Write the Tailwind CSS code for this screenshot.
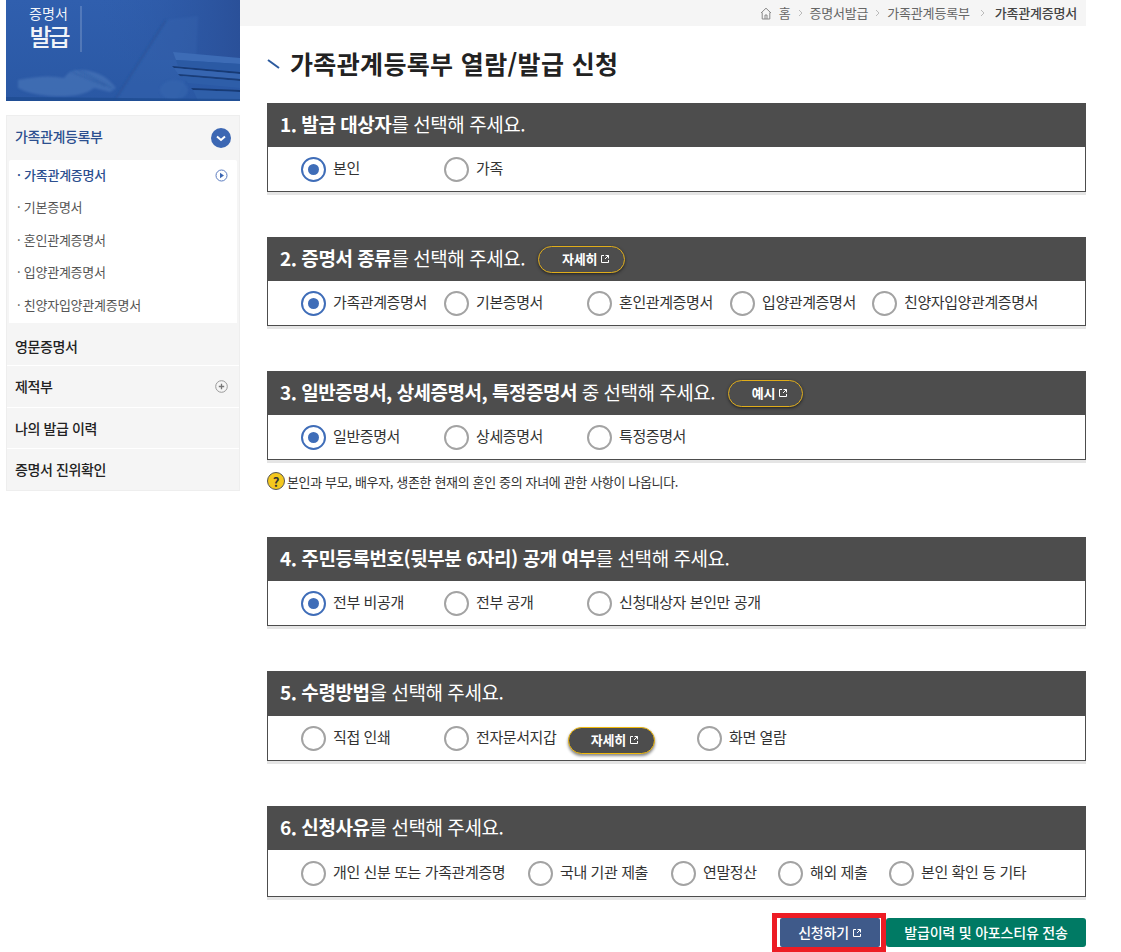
<!DOCTYPE html>
<html lang="ko">
<head>
<meta charset="utf-8">
<script src="https://cdn.jsdelivr.net/npm/@tailwindcss/browser@4"></script>
</head>
<body class="bg-white overflow-hidden">
<div class="w-[1121px] h-[952px] overflow-hidden flex items-start font-['Noto_Sans_CJK_KR','Noto_Sans_KR',sans-serif] text-[#333]">
  <!-- sidebar -->
  <aside class="w-[234px] ml-[6px] shrink-0">
    <div class="relative h-[101px] overflow-hidden bg-gradient-to-b from-[#305fae] to-[#2a58a4]">
      <svg class="absolute inset-0" width="234" height="101" viewBox="0 0 234 101">
        <defs>
          <filter id="b1"><feGaussianBlur stdDeviation="1"/></filter>
          <linearGradient id="g1" x1="0" x2="1"><stop offset="0" stop-color="#2f5dab" stop-opacity="0"/><stop offset="1" stop-color="#2a5099"/></linearGradient>
        </defs>
        <rect x="90" y="0" width="144" height="60" fill="url(#g1)"/>
        <path d="M109 100 L160 20 L192 16 L190 60 L170 100Z" fill="#3a69b3" opacity=".3" filter="url(#b1)"/>
        <path d="M109 100 L160 20" stroke="#2a5299" stroke-width="1.5" filter="url(#b1)"/>
        <path d="M167 52 L234 58 L234 64 L170 60Z" fill="#3d6cb6"/>
        <path d="M170 60 L234 64 L234 71 L172 66Z" fill="#2b5aa4"/>
        <path d="M166 66 L234 72 L234 74 L168 68Z" fill="#173a74"/>
        <path d="M168 68 L234 74 L234 79 L172 74Z" fill="#3665b0"/>
        <path d="M172 74 L234 79 L234 81 L174 76Z" fill="#1a3d78"/>
        <path d="M176 76 L234 81 L234 88 L182 83Z" fill="#2e5ea9"/>
        <path d="M185 88 L234 90 L234 92 L187 90Z" fill="#173a74"/>
        <path d="M187 90 L234 92 L234 101 L192 101Z" fill="#2f5fa9"/>
        <ellipse cx="168" cy="90" rx="14" ry="10" fill="#3565ae" opacity=".7" filter="url(#b1)"/>
        <path d="M12 80 Q40 74 58 78 Q64 68 78 70 Q98 72 110 88 L104 92 L88 88 Q76 98 44 96 Q22 94 12 88Z" fill="#4f7bbd" opacity=".55" filter="url(#b1)"/>
        <path d="M66 72 L100 86 M72 70 L106 88" stroke="#2c5aa2" filter="url(#b1)"/>
        <path d="M0 97 L234 99 L234 101 L0 101Z" fill="#1d4a8e" opacity=".7"/>
        <line x1="75" y1="6" x2="75" y2="52" stroke="#fff" stroke-opacity=".35"/>
      </svg>
      <div class="absolute left-[23px] top-[6px] text-white/95 text-center leading-none">
        <div class="text-[14px] tracking-[0.1px]">증명서</div>
        <div class="text-[24px] font-medium mt-[4px] tracking-[-3px]">발급</div>
      </div>
    </div>
    <nav class="mt-[14px] bg-[#f5f5f5] border border-[#eeeeee] h-[376px] tracking-[-0.4px]">
      <div class="h-[44px] flex items-center justify-between pl-[8px] pr-[8px]">
        <span class="text-[14px] font-medium text-[#2c4f8f] pb-[3px]">가족관계등록부</span>
        <span class="w-[20px] h-[20px] rounded-full bg-[#3c67b3] flex items-center justify-center">
          <svg width="10" height="7" viewBox="0 0 10 7" fill="none" stroke="#fff" stroke-width="2"><path d="M1 1.5 L5 5 L9 1.5"/></svg>
        </span>
      </div>
      <ul class="mx-[2px] bg-white h-[163px] text-[13px] text-[#555] tracking-[-0.25px] rounded-t-[2px]">
        <li class="h-[32px] flex items-center justify-between pl-[8px] pr-[9px] pb-[2px] font-medium text-[#2c4f8f]"><span>· 가족관계증명서</span>
          <svg width="13" height="13" viewBox="0 0 13 13"><circle cx="6.5" cy="6.5" r="5.5" fill="none" stroke="#5b7cc0"/><path d="M5 3.8 L9 6.5 L5 9.2Z" fill="#3c67b3"/></svg></li>
        <li class="h-[33px] flex items-center pl-[8px] pb-[3px]">· 기본증명서</li>
        <li class="h-[32px] flex items-center pl-[8px] pb-[2px]">· 혼인관계증명서</li>
        <li class="h-[33px] flex items-center pl-[8px] pb-[3px]">· 입양관계증명서</li>
        <li class="h-[32px] flex items-center pl-[8px] pb-[3px]">· 친양자입양관계증명서</li>
      </ul>
      <div class="h-[43px] flex items-center px-[8px] pt-[4px] text-[14px] font-medium text-[#222] border-b border-white">영문증명서</div>
      <div class="h-[42px] flex items-center justify-between pl-[8px] pr-[11px] text-[14px] font-medium text-[#222] border-b border-white">제적부
        <svg width="13" height="13" viewBox="0 0 13 13"><circle cx="6.5" cy="6.5" r="5.8" fill="#f5f5f5" stroke="#999"/><path d="M6.5 3.8 V9.2 M3.8 6.5 H9.2" stroke="#777" stroke-width="1.3"/></svg></div>
      <div class="h-[41px] flex items-center px-[8px] pt-[1px] text-[14px] font-medium text-[#222] border-b border-white">나의 발급 이력</div>
      <div class="h-[41px] flex items-center px-[8px] text-[14px] font-medium text-[#222]">증명서 진위확인</div>
    </nav>
  </aside>

  <!-- main -->
  <main class="w-[846px] shrink-0">
    <div class="h-[26px] bg-[#f5f5f5] flex items-center justify-end pr-[9px] text-[13px] text-[#666] tracking-[-0.2px] gap-[7px]">
      <svg width="12" height="13" viewBox="0 0 12 13" fill="none" stroke="#888"><path d="M1 6 L6 1.2 L11 6 M2.2 5.5 V12 H9.8 V5.5 M5 12 V8 H7 V12"/></svg>
      <span>홈</span>
      <svg width="5" height="8" viewBox="0 0 5 8" fill="none" stroke="#bbb"><path d="M1 1 L4 4 L1 7"/></svg>
      <span>증명서발급</span>
      <svg width="5" height="8" viewBox="0 0 5 8" fill="none" stroke="#bbb"><path d="M1 1 L4 4 L1 7"/></svg>
      <span>가족관계등록부</span>
      <svg class="mx-[3px]" width="5" height="8" viewBox="0 0 5 8" fill="none" stroke="#bbb"><path d="M1 1 L4 4 L1 7"/></svg>
      <span class="font-medium text-[#444]">가족관계증명서</span>
    </div>

    <div class="pl-[27px]">
      <h1 class="h-[77px] flex items-center gap-[10px] text-[25px] font-bold text-[#222] tracking-[0.35px] pb-[2px]">
        <svg width="13" height="10" viewBox="0 0 13 10"><path d="M1 1 L12 9" stroke="#2c5a9e" stroke-width="2"/></svg>
        가족관계등록부 열람/발급 신청
      </h1>

      <!-- 1 -->
      <section class="shadow-[0_3px_0_#e5e5e5]">
        <h2 class="h-[44px] bg-[#4d4d4d] text-white text-[19px] flex items-center pl-[13px] pb-[2px] tracking-[-0.45px] font-normal"><b class="font-bold whitespace-pre">1. 발급 대상자</b>를 선택해 주세요.</h2>
        <div class="h-[45px] border border-t-0 border-[#4d4d4d] flex items-center pl-[33px] pb-[2px] text-[15px] text-[#333] tracking-[-0.4px] [&>label>span:first-child]:translate-y-[1px]">
          <label class="w-[143px] flex items-center gap-[7px]"><span class="w-[25px] h-[25px] rounded-full border-2 border-[#3f6db8] flex items-center justify-center"><span class="w-[11px] h-[11px] rounded-full bg-[#3f6db8]"></span></span>본인</label>
          <label class="w-[143px] flex items-center gap-[7px]"><span class="w-[25px] h-[25px] rounded-full border-2 border-[#a3a3a3]"></span>가족</label>
        </div>
      </section>

      <!-- 2 -->
      <section class="mt-[45px] shadow-[0_3px_0_#e5e5e5]">
        <h2 class="h-[44px] bg-[#4d4d4d] text-white text-[19px] flex items-center pl-[13px] tracking-[-0.45px] font-normal"><b class="font-bold whitespace-pre pb-[2px]">2. 증명서 종류</b><span class="pb-[2px]">를 선택해 주세요.</span>
          <span class="ml-[13px] w-[87px] h-[27px] rounded-full border border-[#e0ad1a] flex items-center justify-center gap-[3px] pl-[9px] text-[13px] font-bold tracking-[-0.2px] shadow-[0_1px_3px_#222]">자세히
            <svg width="10" height="10" viewBox="0 0 10 10" fill="none" stroke="#fff"><path d="M4 1.5 H1.5 V8.5 H8.5 V6 M5 5 L8.5 1.5 M5.5 1.5 H8.5 V4.5"/></svg></span></h2>
        <div class="h-[45px] border border-t-0 border-[#4d4d4d] flex items-center pl-[33px] pb-[2px] text-[15px] text-[#333] tracking-[-0.4px] [&>label>span:first-child]:translate-y-[1px]">
          <label class="w-[143px] flex items-center gap-[7px]"><span class="w-[25px] h-[25px] rounded-full border-2 border-[#3f6db8] flex items-center justify-center"><span class="w-[11px] h-[11px] rounded-full bg-[#3f6db8]"></span></span>가족관계증명서</label>
          <label class="w-[143px] flex items-center gap-[7px]"><span class="w-[25px] h-[25px] rounded-full border-2 border-[#a3a3a3]"></span>기본증명서</label>
          <label class="w-[143px] flex items-center gap-[7px]"><span class="w-[25px] h-[25px] rounded-full border-2 border-[#a3a3a3]"></span>혼인관계증명서</label>
          <label class="w-[142px] flex items-center gap-[7px]"><span class="w-[25px] h-[25px] rounded-full border-2 border-[#a3a3a3]"></span>입양관계증명서</label>
          <label class="flex items-center gap-[7px]"><span class="w-[25px] h-[25px] rounded-full border-2 border-[#a3a3a3]"></span>친양자입양관계증명서</label>
        </div>
      </section>

      <!-- 3 -->
      <section class="mt-[45px] shadow-[0_3px_0_#e5e5e5]">
        <h2 class="h-[44px] bg-[#4d4d4d] text-white text-[19px] flex items-center pl-[13px] tracking-[-0.5px] font-normal"><b class="font-bold whitespace-pre pb-[2px]">3. 일반증명서, 상세증명서, 특정증명서</b><span class="whitespace-pre pb-[2px]"> 중 선택해 주세요.</span>
          <span class="ml-[13px] w-[75px] h-[27px] rounded-full border border-[#e0ad1a] flex items-center justify-center gap-[3px] pl-[9px] text-[13px] font-bold tracking-[-0.2px] shadow-[0_1px_3px_#222]">예시
            <svg width="10" height="10" viewBox="0 0 10 10" fill="none" stroke="#fff"><path d="M4 1.5 H1.5 V8.5 H8.5 V6 M5 5 L8.5 1.5 M5.5 1.5 H8.5 V4.5"/></svg></span></h2>
        <div class="h-[45px] border border-t-0 border-[#4d4d4d] flex items-center pl-[33px] pb-[2px] text-[15px] text-[#333] tracking-[-0.4px] [&>label>span:first-child]:translate-y-[1px]">
          <label class="w-[143px] flex items-center gap-[7px]"><span class="w-[25px] h-[25px] rounded-full border-2 border-[#3f6db8] flex items-center justify-center"><span class="w-[11px] h-[11px] rounded-full bg-[#3f6db8]"></span></span>일반증명서</label>
          <label class="w-[143px] flex items-center gap-[7px]"><span class="w-[25px] h-[25px] rounded-full border-2 border-[#a3a3a3]"></span>상세증명서</label>
          <label class="w-[143px] flex items-center gap-[7px]"><span class="w-[25px] h-[25px] rounded-full border-2 border-[#a3a3a3]"></span>특정증명서</label>
        </div>
      </section>
      <p class="h-[77px] pt-[12px] flex items-start gap-[2px] text-[13px] text-[#333] tracking-[-0.35px]">
        <span class="w-[18px] h-[18px] rounded-full bg-[#f4c81e] border border-[#555] flex items-center justify-center text-[13px] leading-none font-bold text-[#333] shrink-0">?</span>
        본인과 부모, 배우자, 생존한 현재의 혼인 중의 자녀에 관한 사항이 나옵니다.
      </p>

      <!-- 4 -->
      <section class="shadow-[0_3px_0_#e5e5e5]">
        <h2 class="h-[44px] bg-[#4d4d4d] text-white text-[19px] flex items-center pl-[13px] pb-[2px] tracking-[-0.45px] font-normal"><b class="font-bold whitespace-pre">4. 주민등록번호(뒷부분 6자리) 공개 여부</b>를 선택해 주세요.</h2>
        <div class="h-[45px] border border-t-0 border-[#4d4d4d] flex items-center pl-[33px] pb-[2px] text-[15px] text-[#333] tracking-[-0.4px] [&>label>span:first-child]:translate-y-[1px]">
          <label class="w-[143px] flex items-center gap-[7px]"><span class="w-[25px] h-[25px] rounded-full border-2 border-[#3f6db8] flex items-center justify-center"><span class="w-[11px] h-[11px] rounded-full bg-[#3f6db8]"></span></span>전부 비공개</label>
          <label class="w-[143px] flex items-center gap-[7px]"><span class="w-[25px] h-[25px] rounded-full border-2 border-[#a3a3a3]"></span>전부 공개</label>
          <label class="flex items-center gap-[7px]"><span class="w-[25px] h-[25px] rounded-full border-2 border-[#a3a3a3]"></span>신청대상자 본인만 공개</label>
        </div>
      </section>

      <!-- 5 -->
      <section class="mt-[45px] shadow-[0_3px_0_#e5e5e5]">
        <h2 class="h-[45px] bg-[#4d4d4d] text-white text-[19px] flex items-center pl-[13px] pb-[2px] tracking-[-0.45px] font-normal"><b class="font-bold whitespace-pre">5. 수령방법</b>을 선택해 주세요.</h2>
        <div class="h-[45px] border border-t-0 border-[#4d4d4d] flex items-center pl-[33px] pb-[2px] text-[15px] text-[#333] tracking-[-0.4px] [&>label>span:first-child]:translate-y-[1px]">
          <label class="w-[143px] flex items-center gap-[7px]"><span class="w-[25px] h-[25px] rounded-full border-2 border-[#a3a3a3]"></span>직접 인쇄</label>
          <label class="w-[253px] flex items-center gap-[7px]"><span class="w-[25px] h-[25px] rounded-full border-2 border-[#a3a3a3]"></span>전자문서지갑
            <span class="ml-[5px] w-[87px] h-[27px] translate-y-[3px] rounded-full bg-[#4d4d4d] border border-[#f0b90b] text-white flex items-center justify-center gap-[3px] pl-[6px] text-[13px] font-bold tracking-[-0.2px] shadow-[0_2px_3px_#888]">자세히
              <svg width="10" height="10" viewBox="0 0 10 10" fill="none" stroke="#fff"><path d="M4 1.5 H1.5 V8.5 H8.5 V6 M5 5 L8.5 1.5 M5.5 1.5 H8.5 V4.5"/></svg></span></label>
          <label class="flex items-center gap-[7px]"><span class="w-[25px] h-[25px] rounded-full border-2 border-[#a3a3a3]"></span>화면 열람</label>
        </div>
      </section>

      <!-- 6 -->
      <section class="mt-[45px] shadow-[0_3px_0_#e5e5e5]">
        <h2 class="h-[44px] bg-[#4d4d4d] text-white text-[19px] flex items-center pl-[13px] pb-[2px] tracking-[-0.45px] font-normal"><b class="font-bold whitespace-pre">6. 신청사유</b>를 선택해 주세요.</h2>
        <div class="h-[47px] border border-t-0 border-[#4d4d4d] flex items-center pl-[33px] pb-[2px] text-[15px] text-[#333] tracking-[-0.4px] [&>label>span:first-child]:translate-y-[1px]">
          <label class="w-[227px] flex items-center gap-[7px]"><span class="w-[25px] h-[25px] rounded-full border-2 border-[#a3a3a3]"></span>개인 신분 또는 가족관계증명</label>
          <label class="w-[143px] flex items-center gap-[7px]"><span class="w-[25px] h-[25px] rounded-full border-2 border-[#a3a3a3]"></span>국내 기관 제출</label>
          <label class="w-[107px] flex items-center gap-[7px]"><span class="w-[25px] h-[25px] rounded-full border-2 border-[#a3a3a3]"></span>연말정산</label>
          <label class="w-[111px] flex items-center gap-[7px]"><span class="w-[25px] h-[25px] rounded-full border-2 border-[#a3a3a3]"></span>해외 제출</label>
          <label class="flex items-center gap-[7px]"><span class="w-[25px] h-[25px] rounded-full border-2 border-[#a3a3a3]"></span>본인 확인 등 기타</label>
        </div>
      </section>

      <div class="mt-[16px] flex justify-end items-start text-white text-[14px] font-medium tracking-[-0.2px]">
        <div class="w-[114px] h-[39px] border-[5px] border-[#ed1c24] pl-[3px] pr-[1px] flex items-stretch bg-white">
          <span class="flex-1 bg-[#3f5a8a] rounded-[2px] flex items-center justify-center gap-[3px]">신청하기
            <svg width="10" height="10" viewBox="0 0 10 10" fill="none" stroke="#fff"><path d="M4 1.5 H1.5 V8.5 H8.5 V6 M5 5 L8.5 1.5 M5.5 1.5 H8.5 V4.5"/></svg></span>
        </div>
        <span class="mt-[5px] w-[200px] h-[29px] bg-[#007a64] rounded-[3px] flex items-center justify-center">발급이력 및 아포스티유 전송</span>
      </div>
    </div>
  </main>
</div>
</body>
</html>
